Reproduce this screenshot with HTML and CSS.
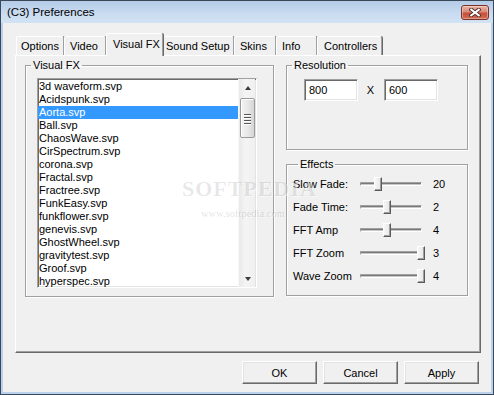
FILE: index.html
```html
<!DOCTYPE html>
<html>
<head>
<meta charset="utf-8">
<link rel="stylesheet" href="styles.css">
</head>
<body>
<div class="window">
  <div class="titlebar">
    <span class="title">(C3) Preferences</span>
    <div class="close">
      <svg width="12" height="9" viewBox="0 0 12 9"><path d="M2.2 1.6 L9.8 7.4 M9.8 1.6 L2.2 7.4" stroke="#4a2a26" stroke-width="3.8" stroke-linecap="square"/><path d="M2.2 1.6 L9.8 7.4 M9.8 1.6 L2.2 7.4" stroke="#fff" stroke-width="2" stroke-linecap="square"/></svg>
    </div>
  </div>
  <div class="client">
    <div class="tabs">
      <div class="tab tab-options">Options</div>
      <div class="tab tab-video">Video</div>
      <div class="tab tab-active">Visual FX</div>
      <div class="tab tab-sound">Sound Setup</div>
      <div class="tab tab-skins">Skins</div>
      <div class="tab tab-info">Info</div>
      <div class="tab tab-controllers">Controllers</div>
    </div>
    <div class="panel">
      <fieldset class="group group-fx">
        <legend>Visual FX</legend>
        <div class="listbox">
          <ul class="items">
            <li>3d waveform.svp</li>
            <li>Acidspunk.svp</li>
            <li class="selected">Aorta.svp</li>
            <li>Ball.svp</li>
            <li>ChaosWave.svp</li>
            <li>CirSpectrum.svp</li>
            <li>corona.svp</li>
            <li>Fractal.svp</li>
            <li>Fractree.svp</li>
            <li>FunkEasy.svp</li>
            <li>funkflower.svp</li>
            <li>genevis.svp</li>
            <li>GhostWheel.svp</li>
            <li>gravitytest.svp</li>
            <li>Groof.svp</li>
            <li>hyperspec.svp</li>
          </ul>
          <div class="scrollbar">
            <div class="sb-btn"><span class="arrow-up"></span></div>
            <div class="sb-thumb"><span class="grip"></span><span class="grip"></span><span class="grip"></span><span class="grip"></span></div>
            <div class="sb-track"></div>
            <div class="sb-btn"><span class="arrow-down"></span></div>
          </div>
        </div>
      </fieldset>
      <div class="right-col">
        <fieldset class="group group-res">
          <legend>Resolution</legend>
          <div class="res-row">
            <input class="field" type="text" value="800">
            <span class="times">X</span>
            <input class="field" type="text" value="600">
          </div>
        </fieldset>
        <fieldset class="group group-eff">
          <legend>Effects</legend>
          <div class="effect-row">
            <span class="eff-label">Slow Fade:</span>
            <div class="slider"><div class="track"></div><div class="thumb" style="left:14px"></div></div>
            <span class="eff-value">20</span>
          </div>
          <div class="effect-row">
            <span class="eff-label">Fade Time:</span>
            <div class="slider"><div class="track"></div><div class="thumb" style="left:23px"></div></div>
            <span class="eff-value">2</span>
          </div>
          <div class="effect-row">
            <span class="eff-label">FFT Amp</span>
            <div class="slider"><div class="track"></div><div class="thumb" style="left:23px"></div></div>
            <span class="eff-value">4</span>
          </div>
          <div class="effect-row">
            <span class="eff-label">FFT Zoom</span>
            <div class="slider"><div class="track"></div><div class="thumb" style="left:57px"></div></div>
            <span class="eff-value">3</span>
          </div>
          <div class="effect-row">
            <span class="eff-label">Wave Zoom</span>
            <div class="slider"><div class="track"></div><div class="thumb" style="left:57px"></div></div>
            <span class="eff-value">4</span>
          </div>
        </fieldset>
      </div>
    </div>
    <div class="buttons">
      <button class="btn" type="button">OK</button>
      <button class="btn" type="button">Cancel</button>
      <button class="btn" type="button">Apply</button>
    </div>
  </div>
  <div class="watermark">
    <div class="wm-big">SOFTPEDIA</div>
    <div class="wm-small">www.softpedia.com</div>
  </div>
</div>
</body>
</html>
```

FILE: styles.css
```css
* { box-sizing: border-box; }
html, body { margin: 0; padding: 0; }
body {
  font-family: "Liberation Sans", Arial, sans-serif;
  font-size: 11px;
  color: #000;
  background: #fff;
}

.window {
  position: relative;
  width: 494px;
  height: 395px;
  border: 1px solid #3a4858;
  background: #b9d1ec;
  display: flex;
  flex-direction: column;
  overflow: hidden;
}

.titlebar {
  flex: none;
  height: 22px;
  display: flex;
  align-items: center;
  justify-content: space-between;
  padding: 0 4px 0 6px;
  background: linear-gradient(#b4cbe7, #cadcf1 60%, #d2e3f4);
}
.title {
  font-size: 11.5px;
  color: #000;
}
.close {
  width: 28px;
  height: 15px;
  border: 1px solid #7a3326;
  border-radius: 3px;
  background: linear-gradient(#eab3a6, #d98a78 45%, #c6503a 55%, #d36a52);
  display: flex;
  align-items: center;
  justify-content: center;
  box-shadow: inset 0 0 0 1px rgba(255,255,255,0.35);
}

.client {
  flex: 1;
  margin: 0 2px 2px;
  background: #f0f0f0;
  display: flex;
  flex-direction: column;
}

.tabs {
  position: relative;
  z-index: 2;
  margin-top: 10px;
  height: 22px;
  padding-left: 13px;
  display: flex;
  align-items: flex-end;
}
.tab {
  height: 19px;
  padding-left: 5px;
  display: flex;
  align-items: center;
  white-space: nowrap;
  background: #f0f0f0;
  border-top: 1px solid #fff;
  border-left: 1px solid #fff;
  border-right: 1px solid #a0a0a0;
  box-shadow: 1px 0 0 #696969;
  border-radius: 2px 2px 0 0;
  position: relative;
}
.tab-options { width: 48px; padding-left: 4px; }
.tab-video { width: 42px; padding-left: 5px; }
.tab-active {
  width: 57px;
  height: 23px;
  margin-bottom: -1px;
  padding-left: 6px;
  padding-bottom: 2px;
  z-index: 3;
}
.tab-sound { width: 71px; padding-left: 2px; }
.tab-skins { width: 42px; padding-left: 5px; }
.tab-info { width: 41px; padding-left: 5px; }
.tab-controllers { width: 65px; padding-left: 6px; }

.panel {
  position: relative;
  z-index: 1;
  margin-left: 12px;
  width: 466px;
  height: 298px;
  border-top: 1px solid #fff;
  border-left: 1px solid #fff;
  border-right: 1px solid #696969;
  border-bottom: 1px solid #696969;
  box-shadow: inset -1px -1px 0 #a0a0a0;
  padding: 3px 0 0 9px;
  display: grid;
  grid-template-columns: 249px 182px;
  column-gap: 12px;
  align-items: start;
}

.group {
  margin: 0;
  padding: 0;
  min-width: 0;
  border: 1px solid #a0a0a0;
  box-shadow: inset 1px 1px 0 #fff, 1px 1px 0 #fff;
}
.group legend {
  padding: 0 2px;
  margin-left: 5px;
  line-height: 13px;
  font-size: 11px;
}
.group-fx { height: 238px; }

.listbox {
  margin: 6px 0 0 11px;
  width: 220px;
  height: 210px;
  background: #fff;
  border: 1px solid;
  border-color: #a0a0a0 #fff #fff #a0a0a0;
  box-shadow: inset 1px 1px 0 #696969, inset -1px -1px 0 #e3e3e3;
  display: flex;
  overflow: hidden;
}
.items {
  list-style: none;
  margin: 0;
  padding: 1px 0 0 0;
  flex: 1;
  overflow: hidden;
}
.items li {
  height: 13px;
  line-height: 13px;
  padding-left: 1px;
  white-space: nowrap;
}
.items li.selected {
  background: #3399ff;
  color: #fff;
}

.scrollbar {
  flex: none;
  width: 17px;
  margin-right: 1px;
  background: linear-gradient(to right, #e9e9e9, #f4f4f4 40%, #f0f0f0);
  border-left: 1px solid #f8f8f8;
  display: flex;
  flex-direction: column;
  align-items: center;
}
.sb-btn {
  flex: none;
  width: 100%;
  height: 17px;
  display: flex;
  align-items: center;
  justify-content: center;
}
.arrow-up {
  width: 0;
  height: 0;
  border-left: 3.5px solid transparent;
  border-right: 3.5px solid transparent;
  border-bottom: 4px solid #3c3c3c;
  margin-left: 1px;
}
.arrow-down {
  width: 0;
  height: 0;
  border-left: 3.5px solid transparent;
  border-right: 3.5px solid transparent;
  border-top: 4px solid #3c3c3c;
  margin-left: 1px;
}
.sb-thumb {
  flex: none;
  margin-top: 2px;
  width: 15px;
  height: 40px;
  border: 1px solid #9a9a9a;
  border-radius: 2px;
  background: linear-gradient(to right, #f3f3f3, #e8e8e8 50%, #d6d6d6);
  box-shadow: inset 1px 1px 0 #fff;
  display: flex;
  flex-direction: column;
  align-items: center;
  justify-content: center;
  gap: 2px;
  padding-top: 1px;
}
.grip {
  display: block;
  width: 7px;
  height: 1px;
  background: #555;
  box-shadow: 0 1px 0 #fff;
}
.sb-track { flex: 1; }

.right-col {
  display: flex;
  flex-direction: column;
}
.group-res {
  height: 91px;
  margin-bottom: 8px;
}
.res-row {
  margin: 7px 0 0 17px;
  display: grid;
  grid-template-columns: 54px 26px 54px;
  align-items: center;
}
.field {
  width: 54px;
  height: 22px;
  margin: 0;
  padding: 0 0 0 4px;
  font-family: "Liberation Sans", Arial, sans-serif;
  font-size: 11px;
  color: #000;
  background: #fff;
  border: 1px solid;
  border-color: #a0a0a0 #fff #fff #a0a0a0;
  box-shadow: inset 1px 1px 0 #696969, inset -1px -1px 0 #e3e3e3;
  border-radius: 0;
  outline: none;
}
.times {
  text-align: center;
  padding-right: 1px;
}

.group-eff {
  height: 138px;
  padding: 1px 0 0 6px;
}
.effect-row {
  height: 23px;
  display: grid;
  grid-template-columns: 67px 62px 1fr;
  align-items: center;
}
.slider {
  position: relative;
  align-self: stretch;
}
.track {
  margin-top: 10px;
  height: 4px;
  border-top: 1px solid #a0a0a0;
  border-left: 1px solid #a0a0a0;
  border-bottom: 1px solid #fff;
  border-right: 1px solid #fff;
  background: #c8c8c8;
  box-shadow: inset 0 1px 0 #7a7a7a;
}
.thumb {
  position: absolute;
  top: 5px;
  width: 8px;
  height: 14px;
  background: linear-gradient(to right, #f6f6f6, #e6e6e6);
  border-top: 1px solid #fff;
  border-left: 1px solid #fff;
  border-right: 1px solid #5a5a5a;
  border-bottom: 1px solid #5a5a5a;
  box-shadow: inset -1px -1px 0 #a0a0a0;
}
.eff-value {
  padding-left: 11px;
}

.buttons {
  margin-top: 8px;
  padding-right: 12px;
  display: flex;
  justify-content: flex-end;
  gap: 6px;
}
.btn {
  width: 75px;
  height: 23px;
  margin: 0;
  padding: 0;
  font-family: "Liberation Sans", Arial, sans-serif;
  font-size: 11px;
  color: #000;
  background: #f0f0f0;
  border: 1px solid;
  border-color: #fff #696969 #696969 #fff;
  box-shadow: inset -1px -1px 0 #a0a0a0, inset 1px 1px 0 #e3e3e3;
  border-radius: 0;
}

.watermark {
  position: absolute;
  z-index: 5;
  left: 181px;
  top: 175px;
  pointer-events: none;
  font-family: "Liberation Serif", "Times New Roman", serif;
  color: rgba(0, 0, 0, 0.1);
  text-shadow: 1px 1px 0 rgba(255,255,255,0.5);
}
.wm-big {
  font-size: 22px;
  font-weight: bold;
  letter-spacing: 1px;
  line-height: 26px;
}
.wm-small {
  font-size: 10.5px;
  line-height: 12px;
  margin-left: 19px;
  margin-top: 6px;
  color: rgba(0, 0, 0, 0.14);
}
```
